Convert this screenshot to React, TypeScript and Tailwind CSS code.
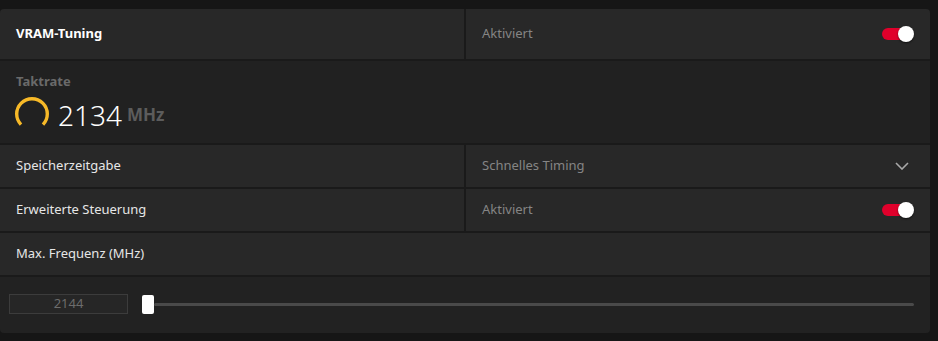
import React from "react";

const font = { fontFamily: '"Noto Sans", "Open Sans", sans-serif' };

function Toggle() {
  return (
    <div className="relative w-[32px] h-[16px] flex items-center">
      <div className="w-[26px] h-[12px] rounded-full bg-[#e0002b]" />
      <div className="absolute right-0 top-0 w-[16px] h-[16px] rounded-full bg-white shadow-[0_1px_2px_rgba(0,0,0,0.6)]" />
    </div>
  );
}

function Gauge() {
  const r = 15.3;
  const cx = 17;
  const cy = 17;
  const a1 = (136 * Math.PI) / 180;
  const a2 = (44 * Math.PI) / 180;
  const x1 = cx + r * Math.cos(a1);
  const y1 = cy + r * Math.sin(a1);
  const x2 = cx + r * Math.cos(a2);
  const y2 = cy + r * Math.sin(a2);
  return (
    <svg width="34" height="30" viewBox="0 0 34 30">
      <path
        d={`M ${x1} ${y1} A ${r} ${r} 0 1 1 ${x2} ${y2}`}
        fill="none"
        stroke="#f7b928"
        strokeWidth="3.4"
      />
    </svg>
  );
}

function Chevron() {
  return (
    <svg width="14" height="8" viewBox="0 0 14 8">
      <path d="M1 1 L7 7 L13 1" fill="none" stroke="#a9a9a9" strokeWidth="1.6" />
    </svg>
  );
}

export default function App() {
  return (
    <div className="w-[938px] h-[341px] bg-[#161616] pt-[9px] overflow-hidden" style={font}>
      <div className="w-[930px] rounded-[4px] overflow-hidden bg-[#1a1a1a] flex flex-col gap-[2px]">
        {/* Row 1 */}
        <div className="h-[50px] grid grid-cols-[464px_1fr] gap-[2px]">
          <div className="bg-[#282828] flex items-center pl-[16px] text-[13px] font-bold text-white">
            VRAM-Tuning
          </div>
          <div className="bg-[#282828] flex items-center justify-between pl-[16px] pr-[16px] text-[13px] text-[#858585]">
            <span>Aktiviert</span>
            <Toggle />
          </div>
        </div>
        {/* Row 2 */}
        <div className="h-[82px] bg-[#212121] flex flex-col pl-[15px] pt-[11px]">
          <div className="text-[13px] font-bold text-[#6a6a6a] leading-[18px] pl-[1px]">Taktrate</div>
          <div className="flex items-end mt-[7px]">
            <Gauge />
            <span className="ml-[9px] text-[28px] font-light text-white leading-[24px]">2134</span>
            <span className="ml-[5px] text-[17px] font-bold text-[#5c5c5c] leading-[24px]">MHz</span>
          </div>
        </div>
        {/* Row 3 */}
        <div className="h-[42px] grid grid-cols-[464px_1fr] gap-[2px]">
          <div className="bg-[#282828] flex items-center pl-[16px] text-[13px] text-[#e6e6e6]">
            Speicherzeitgabe
          </div>
          <div className="bg-[#282828] flex items-center justify-between pl-[16px] pr-[21px] text-[13px] text-[#858585]">
            <span>Schnelles Timing</span>
            <Chevron />
          </div>
        </div>
        {/* Row 4 */}
        <div className="h-[42px] grid grid-cols-[464px_1fr] gap-[2px]">
          <div className="bg-[#282828] flex items-center pl-[16px] text-[13px] text-[#e6e6e6]">
            Erweiterte Steuerung
          </div>
          <div className="bg-[#282828] flex items-center justify-between pl-[16px] pr-[16px] text-[13px] text-[#858585]">
            <span>Aktiviert</span>
            <Toggle />
          </div>
        </div>
        {/* Row 5 */}
        <div className="h-[42px] bg-[#282828] flex items-center pl-[16px] text-[13px] text-[#e6e6e6]">
          Max. Frequenz (MHz)
        </div>
        {/* Row 6 */}
        <div className="h-[56px] bg-[#222222] flex items-center pl-[9px] pr-[16px] pb-[2px]">
          <div className="w-[119px] h-[20px] border border-[#3c3c3c] bg-[#262626] flex items-center justify-center text-[13px] text-[#6c6c6c]">
            2144
          </div>
          <div className="flex-1 flex items-center ml-[14px]">
            <div className="w-[12px] h-[19px] rounded-[2px] bg-white" />
            <div className="flex-1 h-[3px] bg-[#4a4a4a] rounded-full" />
          </div>
        </div>
      </div>
    </div>
  );
}
